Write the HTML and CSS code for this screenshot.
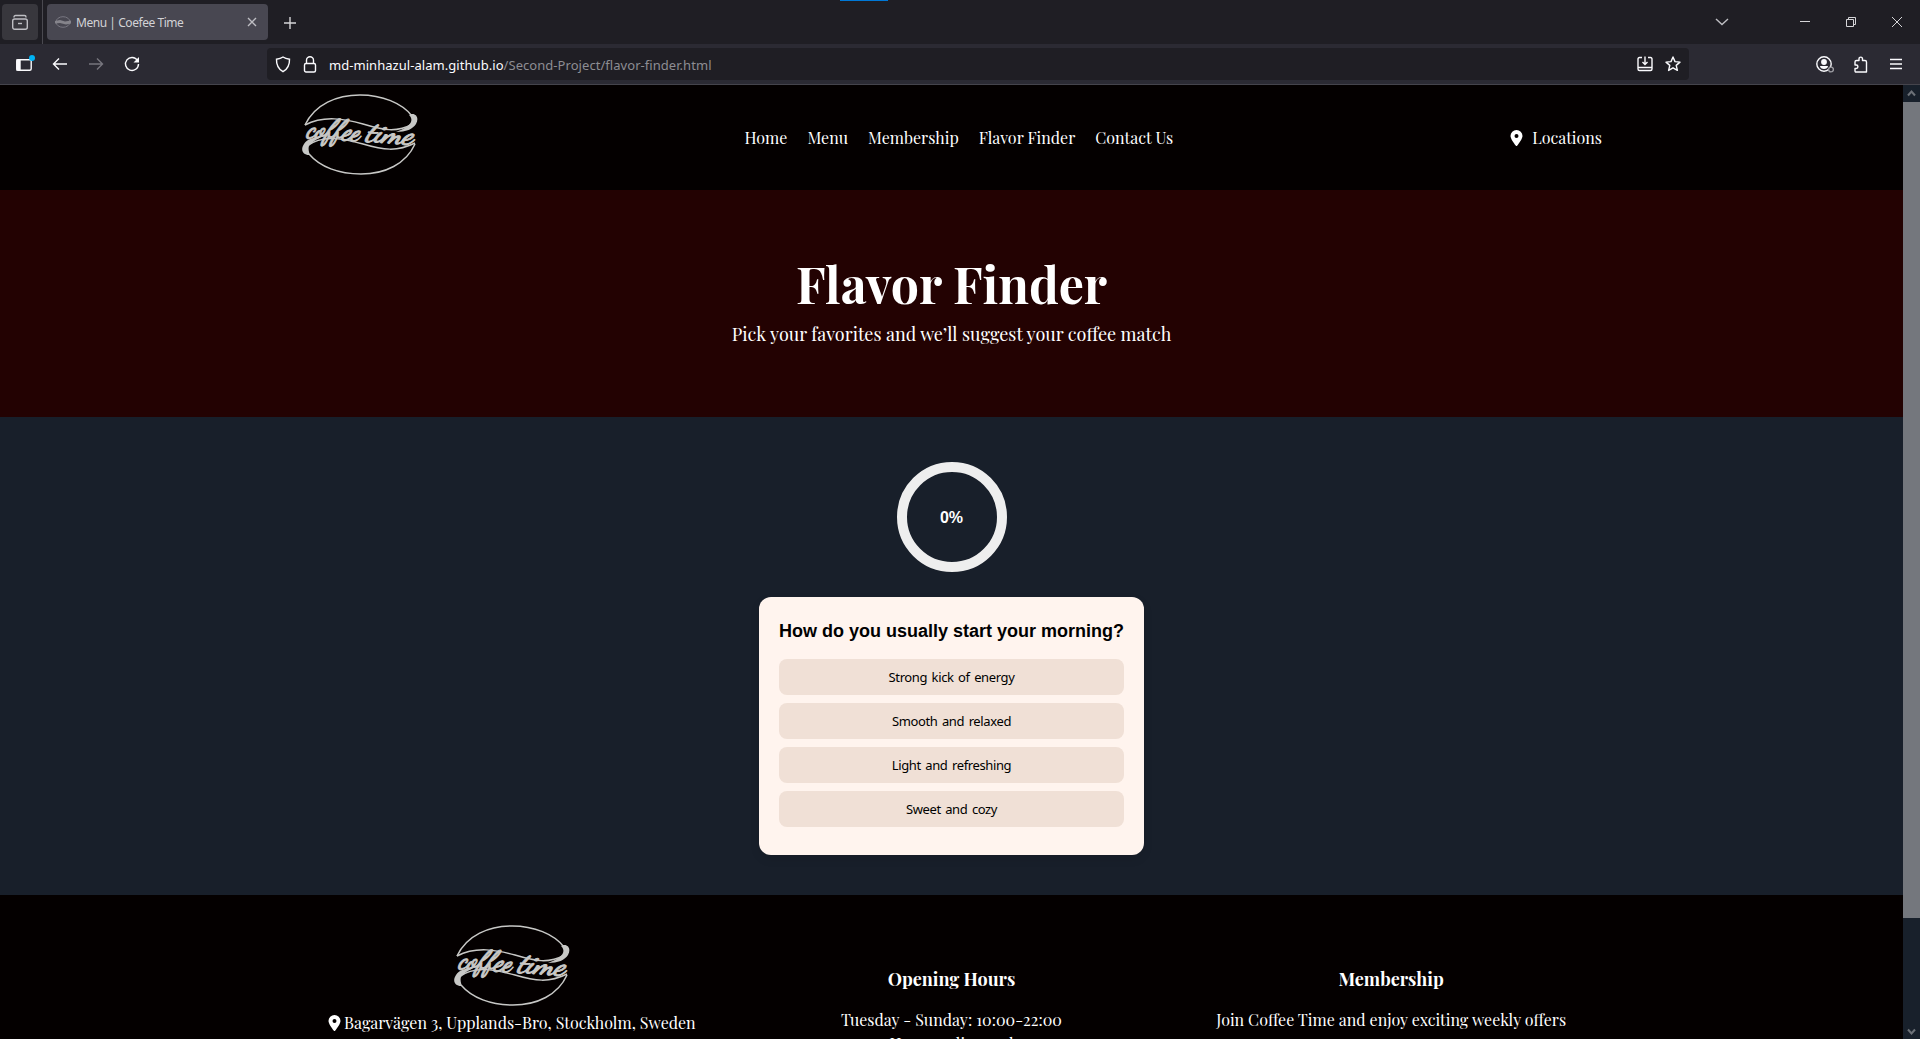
FILE: index.html
```html
<!DOCTYPE html>
<html lang="en">
<head>
<meta charset="utf-8">
<title>Menu | Coefee Time</title>
<link rel="stylesheet" href="styles.css">
</head>
<body>
<svg width="0" height="0" class="defs">
  <defs>
    <symbol id="logo" viewBox="0 0 116 82">
      <g fill="none" stroke="#c8c8c6" stroke-width="1.5">
        <path d="M3 31C13 10 35 1 58 1c22 0 42 8 52 21"/>
        <path d="M3 31C22 21 43 25 61 30c20 6 33 9 50 0"/>
        <path d="M7 60C18 73 37 80 59 80c24 0 45-10 54-30"/>
        <path d="M5 52C21 40 43 45 61 50c20 6 34 8 52-1"/>
      </g>
      <path fill="#c8c8c6" d="M109 20c6-1 8 5 5 10-3 5-10 8-20 8 8-3 13-6 15-10 1-3 0-5-2-7zM7 61c-6 0-9-5-5-11 3-5 10-7 20-8-8 3-13 7-15 10-1 3 0 6 1 9z"/>
      <g fill="#c8c8c6" stroke="#c8c8c6" stroke-width=".9" class="logo-text">
        <text x="4" y="43" textLength="53" lengthAdjust="spacingAndGlyphs" transform="rotate(4 4 43)">coffee</text>
        <text x="63" y="47" textLength="47" lengthAdjust="spacingAndGlyphs" transform="rotate(4 63 47)">time</text>
      </g>
    </symbol>
    <symbol id="pin" viewBox="0 0 12 16"><path fill="#fff" fill-rule="evenodd" d="M6 0a6 6 0 0 1 6 6c0 2.700-3.600 7.500-5.200 9.600a1 1 0 0 1-1.600 0C3.600 13.500 0 8.700 0 6a6 6 0 0 1 6-6zm0 4a2 2 0 1 0 0 4 2 2 0 0 0 0-4z"/></symbol>
  </defs>
</svg>
<div class="browser">
  <div class="tabs">
    <span class="accent"></span>
    <span class="recent"><svg width="18" height="18" viewBox="0 0 18 18" class="ic dim"><path d="M3 4.500V4c0-.8.600-1.500 1.500-1.500h9c.8 0 1.500.7 1.500 1.500v.5"/><rect x="1.700" y="6" width="14.600" height="10.300" rx="2"/><path d="M7 10.500h4"/></svg></span>
    <span class="tab">
      <svg width="16" height="12" viewBox="0 0 16 12"><ellipse cx="8" cy="6" rx="7" ry="5.300" fill="none" stroke="#777680"/><path d="M0 5l5-1 5 1.500 6-1v3l-5 1-6-1.500-5 .5z" fill="#85848b"/></svg>
      <span class="tab-title">Menu | Coefee Time</span>
      <svg width="10" height="10" viewBox="0 0 10 10" class="ic dim"><path d="M1 1l8 8M9 1L1 9"/></svg>
    </span>
    <svg width="14" height="14" viewBox="0 0 14 14" class="ic plus"><path d="M7 1v12M1 7h12"/></svg>
    <span class="win">
      <svg width="14" height="8" viewBox="0 0 14 8" class="ic dim"><path d="M1 1l6 5.500L13 1"/></svg>
      <svg width="10" height="10" viewBox="0 0 10 10" class="ic thin"><path d="M0 4.500h10"/></svg>
      <svg width="10" height="10" viewBox="0 0 10 10" class="ic thin"><path d="M.5 2.500h7v7h-7zM2.500 2.500v-2h7v7h-2"/></svg>
      <svg width="10" height="10" viewBox="0 0 10 10" class="ic thin"><path d="M0 0l10 10M10 0L0 10"/></svg>
    </span>
  </div>
  <div class="toolbar">
    <div class="nav-icons">
      <svg width="20" height="18" viewBox="0 0 20 18" class="ic"><rect x=".8" y="4.800" width="14.400" height="10.400" rx="1.500"/><path d="M1 5h3v10H1z" fill="#fbfbfe"/><circle cx="16" cy="3" r="3" fill="#00b3f4" stroke="none"/></svg>
      <svg width="16" height="16" viewBox="0 0 16 16" class="ic"><path d="M15 8H2M7 2.500L1.500 8 7 13.500"/></svg>
      <svg width="16" height="16" viewBox="0 0 16 16" class="ic off"><path d="M1 8h13M9 2.500L14.500 8 9 13.500"/></svg>
      <svg width="16" height="16" viewBox="0 0 16 16" class="ic"><path d="M13.500 4.500A6.500 6.500 0 1 0 14.500 8"/><path d="M15 1v5.500H9.500z" fill="#fbfbfe" stroke="none"/></svg>
    </div>
    <div class="url">
      <svg width="16" height="17" viewBox="0 0 16 17" class="ic"><path d="M8 1c2 1.400 4 1.900 6.500 2.200.2 5-1 9.300-6.500 12.500C2.500 12.500 1.300 8.200 1.500 3.200 4 2.900 6 2.400 8 1z"/></svg>
      <svg width="14" height="17" viewBox="0 0 14 17" class="ic"><rect x="1.500" y="7.500" width="11" height="8.500" rx="1.500"/><path d="M3.500 7.500V4.300a3.500 3.500 0 0 1 7 0v3.200"/></svg>
      <span class="address"><b>md-minhazul-alam.github.io</b>/Second-Project/flavor-finder.html</span>
      <svg width="16" height="16" viewBox="0 0 16 16" class="ic"><path d="M5 1.500H2.500c-1 0-1.500.5-1.500 1.500v10c0 1 .5 1.500 1.500 1.500h11c1 0 1.500-.5 1.500-1.500V3c0-1-.5-1.500-1.500-1.500H11M1 11.500h14M8 .5V8M5.500 6L8 8.500 10.500 6"/></svg>
      <svg width="16" height="16" viewBox="0 0 16 16" class="ic"><path stroke-linejoin="round" d="M8 1l2 4.600 5 .5-3.800 3.300 1.200 5L8 11.800l-4.400 2.600 1.200-5L1 6.100l5-.5z"/></svg>
    </div>
    <div class="tools">
      <svg width="18" height="17" viewBox="0 0 18 17" class="ic"><circle cx="8" cy="8" r="7.200"/><circle cx="8" cy="6" r="2.200" fill="#fbfbfe"/><path d="M4 10h8c0 2-2 3-4 3s-4-1-4-3z" fill="#fbfbfe" stroke="none"/><circle cx="15" cy="13.500" r="2.400" fill="#2b2a33" stroke="#9b9ba1"/></svg>
      <svg width="16" height="17" viewBox="0 0 16 17" class="ic"><path stroke-linejoin="round" d="M1 6c0-1 .5-1.500 1.500-1.500H5V3c0-2.500 3.500-2.500 3.500 0v1.500H11c1 0 1.500.5 1.500 1.500v10H2c-.7 0-1-.5-1-1v-2.500h1.200c2.300 0 2.300-3.500 0-3.500H1z"/></svg>
      <svg width="12" height="12" viewBox="0 0 12 12" class="ic"><path d="M0 1.500h12M0 6h12M0 10.500h12"/></svg>
    </div>
  </div>
</div>
<div class="viewport">
  <div class="page">
    <header>
      <svg class="logo" width="116" height="82"><use href="#logo"/></svg>
      <nav><a>Home</a><a>Menu</a><a>Membership</a><a>Flavor Finder</a><a>Contact Us</a></nav>
      <a class="locations"><svg width="13" height="16"><use href="#pin"/></svg>Locations</a>
    </header>
    <section class="hero"><h1>Flavor Finder</h1><p>Pick your favorites and we’ll suggest your coffee match</p></section>
    <main>
      <div class="progress"><span>0%</span></div>
      <div class="quiz">
        <h2>How do you usually start your morning?</h2>
        <button>Strong kick of energy</button>
        <button>Smooth and relaxed</button>
        <button>Light and refreshing</button>
        <button>Sweet and cozy</button>
      </div>
    </main>
    <footer>
      <div class="col brand"><svg class="logo" width="116" height="82"><use href="#logo"/></svg><p><svg width="13" height="16"><use href="#pin"/></svg><span>Bagarvägen 3, Upplands-Bro, Stockholm, Sweden</span></p></div>
      <div class="col"><h3>Opening Hours</h3><p>Tuesday - Sunday: 10:00-22:00</p><p>Hours online and</p></div>
      <div class="col"><h3>Membership</h3><p>Join Coffee Time and enjoy exciting weekly offers</p></div>
    </footer>
  </div>
  <div class="scrollbar">
    <svg width="17" height="17" viewBox="0 0 17 17"><path d="M5 10.500L8.500 6.500l3.500 4"/></svg>
    <span class="thumb"></span>
    <svg width="17" height="17" viewBox="0 0 17 17"><path d="M5 7.500l3.500 4 3.500-4"/></svg>
  </div>
</div>
</body>
</html>
```
FILE: styles.css
```css
* { box-sizing: border-box; }
body { margin: 0; width: 1920px; height: 1039px; overflow: hidden; display: flex; flex-direction: column; background: #000; color: #fff; font: 16px/24px "Playfair Display", "Liberation Serif", serif; }
h1, h2, h3, p { margin: 0; }
svg { display: block; flex: none; }
.defs { position: absolute; }
.ic { fill: none; stroke: #fbfbfe; stroke-width: 1.4; }
.dim { stroke: #bebec3; }
.thin { stroke: #d5d5d8; stroke-width: 1; }
.off { stroke: #77767e; }
.browser { height: 85px; flex: none; background: #2b2a33; border-bottom: 1px solid #45444c; font: 13px/16px "Noto Sans", sans-serif; }
.tabs { height: 44px; background: #1f1e24; display: flex; align-items: center; position: relative; }
.accent { position: absolute; left: 840px; top: 0; width: 48px; height: 1px; background: #0078d7; }
.recent { width: 36px; height: 36px; margin-left: 2px; border-radius: 4px; background: #38373d; display: grid; place-items: center; }
.tab { width: 221px; height: 36px; margin-left: 9px; padding: 0 11px 0 8px; border-radius: 4px; background: #484751; display: flex; align-items: center; position: relative; }
.recent + .tab::before { content: ""; position: absolute; left: -5px; top: -4px; width: 1px; height: 44px; background: #4a4950; }
.tab-title { flex: 1; margin-left: 5px; padding-top: 2px; font-size: 12px; color: #d3d3d6; white-space: nowrap; letter-spacing: -.45px; }
.plus { margin: 1px 0 0 15px; stroke: #d5d5d8; }
.win { margin-left: auto; padding-right: 18px; display: flex; align-items: center; gap: 36px; }
.win svg:first-child { margin-right: 35px; }
.toolbar { height: 40px; display: flex; align-items: center; }
.nav-icons { width: 267px; padding-left: 16px; display: flex; align-items: center; gap: 20px; }
.nav-icons svg:first-child { margin-right: -4px; }
.url { width: 1422px; height: 32px; padding: 0 8px; border-radius: 4px; background: #1f1e24; display: flex; align-items: center; gap: 12px; }
.address { flex: 1; padding-top: 2px; color: #8d8d93; letter-spacing: .05px; }
.address b { font-weight: 400; color: #fbfbfe; }
.tools { margin-left: auto; padding-right: 18px; display: flex; align-items: center; gap: 20px; }
.viewport { flex: 1; min-height: 0; display: flex; }
.page { width: 1903px; overflow: hidden; }
header { height: 105px; padding: 0 301px 0 302px; display: flex; align-items: center; background: #040000; }
header .logo { margin-top: -5px; }
nav { display: flex; gap: 20px; margin-left: 326.5px; white-space: nowrap; }
.locations { margin-left: auto; display: flex; align-items: center; gap: 9px; }
.hero { height: 227px; padding-top: 59px; background: #230202; text-align: center; }
.hero h1 { font-size: 50px; line-height: 70px; }
.hero p { font-size: 18px; line-height: 28px; margin-top: 1px; }
main { height: 478px; padding-top: 45px; background: #181f2a; display: flex; flex-direction: column; align-items: center; }
.progress { width: 110px; height: 110px; border: 10px solid #eee; border-radius: 50%; display: grid; place-items: center; font: 700 16px "Liberation Sans", sans-serif; }
.progress span { padding-top: 1px; }
.quiz { width: 385px; height: 258px; margin-top: 25px; padding: 20px; border-radius: 12px; background: #fff4ee; color: #000; display: flex; flex-direction: column; gap: 8px; box-shadow: 0 4px 10px rgba(0,0,0,.1); }
.quiz h2 { font: 700 18px/28px "Liberation Sans", sans-serif; white-space: nowrap; margin-bottom: 6px; text-align: center; }
.quiz button { height: 36px; padding: 0; border: 0; border-radius: 8px; background: #f0e0d6; color: #000; font: 13px "Noto Sans", sans-serif; letter-spacing: -.38px; word-spacing: 1.5px; }
footer { height: 160px; padding: 30px 292px 0; background: #040000; display: grid; grid-template-columns: repeat(3, 1fr); text-align: center; white-space: nowrap; }
.brand { display: flex; flex-direction: column; align-items: center; }
.brand p { display: flex; align-items: center; gap: 3px; margin-top: 4px; }
.col h3 { font-size: 18px; line-height: 26px; margin: 41px 0 16px; }
.logo-text { font: italic 700 29px "Dancing Script", "Liberation Serif", cursive; }
.scrollbar { width: 17px; background: #18202b; display: flex; flex-direction: column; }
.scrollbar path { fill: none; stroke: #6d7178; stroke-width: 2; }
.thumb { height: 816px; margin-bottom: auto; background: #74777d; }
```
